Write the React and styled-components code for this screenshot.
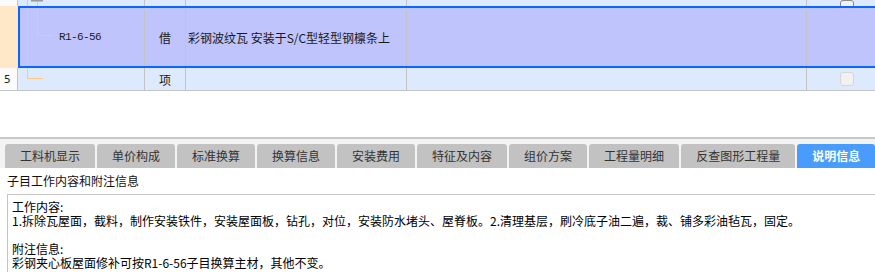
import styled, { createGlobalStyle } from "styled-components";

/* ---------- data ---------- */
const tabs = [
  "工料机显示",
  "单价构成",
  "标准换算",
  "换算信息",
  "安装费用",
  "特征及内容",
  "组价方案",
  "工程量明细",
  "反查图形工程量",
  "说明信息",
];

const LINE = "#ffc77d";

/* ---------- tree guides (drawing) ---------- */
const TopGuides = () => (
  <Guide width="30">
    <line x1="9.5" y1="0" x2="9.5" y2="6" stroke={LINE} />
    <line x1="19.5" y1="0" x2="19.5" y2="6" stroke={LINE} />
    <rect x="13" y="0" width="12" height="1.5" fill="#9a9a9a" />
  </Guide>
);

const SelGuides = () => (
  <Guide width="36">
    <line x1="7.5" y1="0" x2="7.5" y2="58" stroke={LINE} />
    <line x1="17.5" y1="0" x2="17.5" y2="27.5" stroke={LINE} />
    <line x1="17.5" y1="27.5" x2="33" y2="27.5" stroke={LINE} />
  </Guide>
);

const LastGuides = () => (
  <Guide width="30">
    <line x1="9.5" y1="0" x2="9.5" y2="10.5" stroke={LINE} />
    <line x1="9.5" y1="10.5" x2="25" y2="10.5" stroke={LINE} />
  </Guide>
);

export default function App() {
  return (
    <>
      <GlobalStyle />
      <Page>
        {/* --- grid rows --- */}
        <Grid>
          <Row $h={6}>
            <NumCell />
            <Body $tree={127}>
              <TreeCell>
                <TopGuides />
              </TreeCell>
              <Cell />
              <Cell />
              <Cell />
              <CheckCell $end>
                <Check $dark />
              </CheckCell>
            </Body>
          </Row>

          <Row $h={62}>
            <NumCell $peach />
            <Body $tree={125} $selected>
              <TreeCell>
                <SelGuides />
                <Code>R1-6-56</Code>
              </TreeCell>
              <Cell $center>借</Cell>
              <Cell>彩钢波纹瓦 安装于S/C型轻型钢檩条上</Cell>
              <Cell />
              <CheckCell />
            </Body>
          </Row>

          <Row $h={23} $last>
            <NumCell>5</NumCell>
            <Body $tree={127}>
              <TreeCell>
                <LastGuides />
              </TreeCell>
              <Cell $center>项</Cell>
              <Cell />
              <Cell />
              <CheckCell>
                <Check />
              </CheckCell>
            </Body>
          </Row>
        </Grid>

        {/* --- bottom panel --- */}
        <Panel>
          <TabBar>
            {tabs.map((t, i) => (
              <Tab key={t} $active={i === tabs.length - 1}>
                {t}
              </Tab>
            ))}
          </TabBar>
          <Heading>子目工作内容和附注信息</Heading>
          <InfoBox>
            <p>工作内容:</p>
            <p>
              1.拆除瓦屋面，截料，制作安装铁件，安装屋面板，钻孔，对位，安装防水堵头、屋脊板。2.清理基层，刷冷底子油二遍，裁、铺多彩油毡瓦，固定。
            </p>
            <p>&nbsp;</p>
            <p>附注信息:</p>
            <p>彩钢夹心板屋面修补可按R1-6-56子目换算主材，其他不变。</p>
          </InfoBox>
        </Panel>
      </Page>
    </>
  );
}

/* ───────── styled-components ───────── */

const GlobalStyle = createGlobalStyle`
  html, body {
    margin: 0;
    background: #fff;
    overflow: hidden;
  }
  body {
    font-family: "Noto Sans CJK SC", "Noto Sans", sans-serif;
    font-size: 12px;
    color: #1a1a1a;
  }
  * { box-sizing: border-box; }
`;

const Page = styled.div`
  width: 875px;
  height: 272px;
  overflow: hidden;
`;

const Grid = styled.div`
  display: flex;
  flex-direction: column;
`;

const Row = styled.div`
  display: flex;
  height: ${({ $h }) => $h}px;
  border-bottom: ${({ $last }) => ($last ? "1px solid #c4c4c4" : "none")};
  overflow: hidden;
`;

const NumCell = styled.div`
  width: 18px;
  flex: none;
  display: flex;
  align-items: center;
  padding-left: 4px;
  background: ${({ $peach }) => ($peach ? "#ffe8c8" : "#fbfbfb")};
  border-right: ${({ $peach }) => ($peach ? "none" : "1px solid #c4c4c4")};
  font-family: "DejaVu Sans Mono", monospace;
  font-size: 11px;
  color: #222;
`;

const Body = styled.div`
  flex: 1;
  display: grid;
  grid-template-columns: ${({ $tree }) => $tree}px 41px 221px 400px 1fr;
  background: ${({ $selected }) => ($selected ? "#bfc4fc" : "#dde9fc")};
  border: ${({ $selected }) => ($selected ? "2px solid #0a66ff" : "none")};
  border-right: none;
`;

const Cell = styled.div`
  display: flex;
  align-items: center;
  justify-content: ${({ $center }) => ($center ? "center" : "flex-start")};
  padding-left: ${({ $center }) => ($center ? "0" : "2px")};
  border-right: 1px solid #c4c4c4;
  white-space: nowrap;
  overflow: hidden;
`;

const TreeCell = styled(Cell)`
  padding-left: 0;
  align-items: stretch;
`;

const Guide = styled.svg`
  flex: none;
  height: 100%;
  display: block;
`;

const Code = styled.span`
  align-self: center;
  margin-left: 3px;
  font-family: "Liberation Mono", monospace;
  font-size: 11px;
  letter-spacing: -0.6px;
  color: #222;
`;

const CheckCell = styled.div`
  display: flex;
  align-items: ${({ $end }) => ($end ? "flex-end" : "center")};
  padding-left: 33px;
`;

const Check = styled.span`
  width: 14px;
  height: 14px;
  flex: none;
  margin-bottom: ${({ $dark }) => ($dark ? "4px" : "0")};
  border: 1px solid ${({ $dark }) => ($dark ? "#8a8a8a" : "#d6d6d6")};
  border-radius: 3px;
  background: #f1f1f1;
`;

const Panel = styled.div`
  margin-top: 46px;
  border-top: 2px solid #c8c8c8;
`;

const TabBar = styled.div`
  display: flex;
  gap: 2px;
  height: 29px;
  padding: 5px 0 0 5px;
  background: #f3f3f3;
`;

const Tab = styled.div`
  flex: none;
  height: 24px;
  line-height: 24px;
  padding: 0 15px;
  border-radius: 3px 3px 0 0;
  background: ${({ $active }) => ($active ? "#4a9cfc" : "#c2c2c2")};
  color: ${({ $active }) => ($active ? "#fff" : "#333")};
  font-weight: ${({ $active }) => ($active ? 700 : 400)};
  white-space: nowrap;
`;

const Heading = styled.div`
  height: 26px;
  line-height: 26px;
  padding-left: 7px;
  color: #111;
`;

const InfoBox = styled.div`
  margin-left: 7px;
  min-height: 100px;
  padding: 5px 4px;
  border: 1px solid #c4c4c4;
  border-right: none;
  line-height: 14px;
  color: #000;
  white-space: nowrap;

  p {
    margin: 0;
  }
`;
